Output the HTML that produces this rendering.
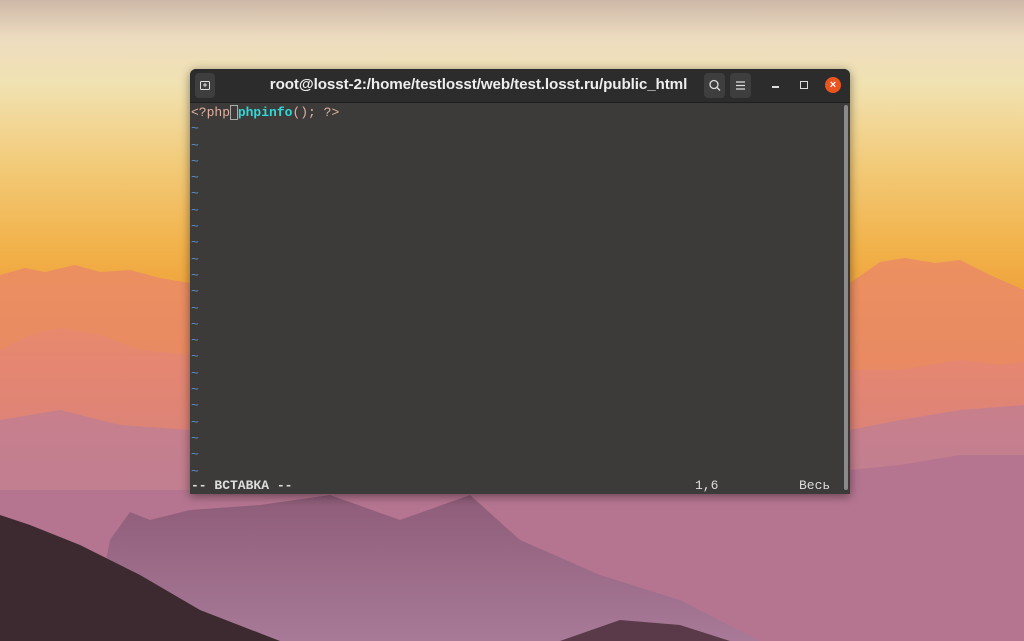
<!DOCTYPE html>
<html><head><meta charset="utf-8"><style>
html,body{margin:0;padding:0;width:1024px;height:641px;overflow:hidden;font-family:"Liberation Sans",sans-serif}
.bg{position:absolute;left:0;top:0}
.win{position:absolute;left:190px;top:69px;width:660px;height:425px;background:#3c3b3a;border-radius:6px 6px 0 0;box-shadow:0 2px 10px rgba(0,0,0,.45);overflow:hidden}
.tb{position:absolute;left:0;top:0;width:660px;height:33px;background:#2c2c2c;border-bottom:1px solid #1e1e1e}
.title{position:absolute;left:0;width:577px;text-align:center;top:7px;color:#eee;font-weight:bold;font-size:15.2px;letter-spacing:-0.1px}
.btn{position:absolute;top:4px;width:21px;height:25px;background:#3e3e3e;border-radius:4px}
.term{position:absolute;left:1px;top:35px;font-family:"Liberation Mono",monospace;font-size:13px;line-height:16.3px;color:#ddd;white-space:pre}
.t{color:#5f8fcf}
.st{position:absolute;top:409px;font-family:"Liberation Mono",monospace;font-size:13px;color:#ddd;font-weight:bold;white-space:pre}
.sb{position:absolute;right:2px;top:36px;width:4px;height:385px;background:#8a8a8a;border-radius:2px}
</style></head><body>
<svg class="bg" width="1024" height="641" viewBox="0 0 1024 641">
<defs>
<linearGradient id="sky" x1="0" y1="0" x2="0" y2="1">
<stop offset="0" stop-color="#cdb8a8"/><stop offset="0.06" stop-color="#eedcc0"/>
<stop offset="0.13" stop-color="#f1e2b2"/><stop offset="0.25" stop-color="#f2cc7c"/>
<stop offset="0.38" stop-color="#f2b34c"/><stop offset="0.45" stop-color="#f0a53e"/><stop offset="1" stop-color="#e88a50"/>
</linearGradient>
<linearGradient id="m1" x1="0" y1="0" x2="0" y2="1"><stop offset="0" stop-color="#ec9060"/><stop offset="1" stop-color="#e07a6a"/></linearGradient>
<linearGradient id="m2" x1="0" y1="0" x2="0" y2="1"><stop offset="0" stop-color="#e8886e"/><stop offset="1" stop-color="#c77a8a"/></linearGradient>
<linearGradient id="m3" x1="0" y1="0" x2="0" y2="1"><stop offset="0" stop-color="#c87f8c"/><stop offset="1" stop-color="#b57e98"/></linearGradient>
<linearGradient id="m4" x1="0" y1="0" x2="0" y2="1"><stop offset="0" stop-color="#8e5c78"/><stop offset="1" stop-color="#a87a98"/></linearGradient>
</defs>
<rect width="1024" height="641" fill="url(#sky)"/>
<path d="M0 275 L25 268 L45 272 L75 265 L100 272 L130 270 L160 278 L190 283 L850 283 L880 262 L905 258 L935 263 L960 260 L990 275 L1024 290 L1024 641 L0 641Z" fill="url(#m1)"/>
<path d="M0 350 L30 335 L60 328 L100 335 L140 350 L190 355 L850 370 L900 370 L960 360 L1000 365 L1024 362 L1024 641 L0 641Z" fill="url(#m2)"/>
<path d="M0 420 L60 410 L120 425 L190 430 L850 430 L900 420 L960 410 L1024 405 L1024 641 L0 641Z" fill="url(#m3)"/>
<path d="M0 490 L190 490 L850 470 L900 465 L960 455 L1024 455 L1024 641 L0 641Z" fill="#b57590"/>
<path d="M90 641 L110 540 L130 512 L150 520 L190 510 L260 505 L330 495 L400 520 L470 495 L520 540 L600 575 L680 600 L760 641Z" fill="url(#m4)"/>
<path d="M560 641 L620 620 L680 625 L730 641Z" fill="#5a3a48"/>
<path d="M0 515 L30 525 L80 545 L140 575 L200 610 L280 641 L0 641Z" fill="#3d2a30"/>
</svg>
<div class="win">
 <div class="tb">
  <div class="btn" style="left:5px;width:20px"><svg width="20" height="25"><rect x="5.5" y="8.5" width="9" height="8" rx="1" fill="none" stroke="#ddd"/><path d="M10 10v4M8 12h4" stroke="#ddd"/></svg></div>
  <div class="title">root@losst-2:/home/testlosst/web/test.losst.ru/public_html</div>
  <div class="btn" style="left:514px"><svg width="21" height="25"><circle cx="10" cy="11.5" r="4" fill="none" stroke="#ddd" stroke-width="1.3"/><path d="M13 14.5l3 3" stroke="#ddd" stroke-width="1.3"/></svg></div>
  <div class="btn" style="left:540px"><svg width="21" height="25"><path d="M6 9h9M6 12.5h9M6 16h9" stroke="#ddd" stroke-width="1.2"/></svg></div>
  <div style="position:absolute;left:582px;top:17px;width:7px;height:1.5px;background:#ddd"></div>
  <div style="position:absolute;left:610px;top:12px;width:6px;height:6px;border:1px solid #ddd"></div>
  <div style="position:absolute;left:635px;top:8px;width:16px;height:16px;border-radius:50%;background:#e9541f;color:#fff;font-size:11px;line-height:16px;text-align:center;font-weight:bold">×</div>
 </div>
 <div class="term" style="top:36px"><span style="color:#e0b0a0">&lt;?php</span><span style="outline:1px solid #aaa;outline-offset:-1px"> </span><span style="color:#30d8d8;font-weight:bold">phpinfo</span><span style="color:#e0b0a0">(); ?&gt;</span>
<span class="t">~
~
~
~
~
~
~
~
~
~
~
~
~
~
~
~
~
~
~
~
~
~</span></div>
 <div class="st" style="left:1px">-- ВСТАВКА --</div>
 <div class="st" style="left:505px;font-weight:normal">1,6</div>
 <div class="st" style="left:609px;font-weight:normal">Весь</div>
 <div class="sb"></div>
</div>
</body></html>
